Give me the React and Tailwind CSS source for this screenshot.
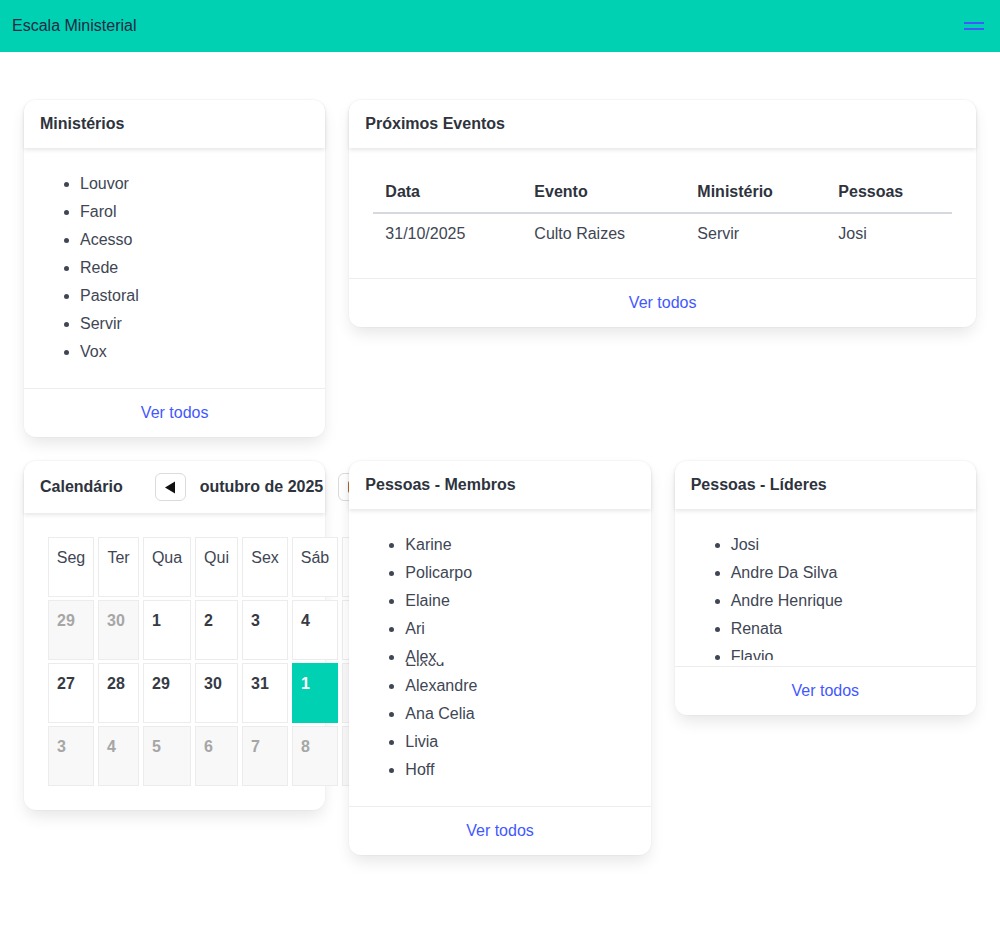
import React from "react";

const font = { fontFamily: '"Liberation Sans", Arial, sans-serif' };

function Card({ title, children, footer = true, className = "" }) {
  return (
    <div className={"relative bg-white rounded-[12px] shadow-[0_8px_16px_-2px_rgba(10,10,10,0.1),0_0_0_1px_rgba(10,10,10,0.02)] " + className}>
      {title}
      {children}
      {footer && (
        <div className="border-t border-[#ededed] h-[49px] flex items-center justify-center text-[#4258ff] text-[16px]">
          Ver todos
        </div>
      )}
    </div>
  );
}

function Header({ text }) {
  return (
    <div className="h-[48px] flex items-center px-4 font-bold text-[16px] text-[#2e333d] shadow-[0_2px_4px_rgba(10,10,10,0.1)] rounded-t-[12px]">
      {text}
    </div>
  );
}

function List({ items }) {
  return (
    <ul className="list-disc pl-8 text-[16px] leading-6 text-[#404654] marker:text-[#404654] flex flex-col gap-1">
      {items.map((it, i) => (
        <li key={i} className={typeof it === "string" ? "" : "h-[25px]"}>{it}</li>
      ))}
    </ul>
  );
}

const colW = [46, 41, 48, 43, 46, 46, 47];
const weekDays = ["Seg", "Ter", "Qua", "Qui", "Sex", "Sáb", "Dom"];
const weeks = [
  [
    ["29", "o"], ["30", "o"], ["1", "c"], ["2", "c"], ["3", "c"], ["4", "c"], ["5", "c"],
  ],
  [
    ["27", "c"], ["28", "c"], ["29", "c"], ["30", "c"], ["31", "c"], ["1", "t"], ["2", "o"],
  ],
  [
    ["3", "o"], ["4", "o"], ["5", "o"], ["6", "o"], ["7", "o"], ["8", "o"], ["9", "o"],
  ],
];

function Calendar() {
  return (
    <div className="relative bg-white rounded-[12px] shadow-[0_8px_16px_-2px_rgba(10,10,10,0.1),0_0_0_1px_rgba(10,10,10,0.02)]">
      <div className="h-[52px] flex items-center pl-4 shadow-[0_2px_4px_rgba(10,10,10,0.1)] rounded-t-[12px] whitespace-nowrap">
        <span className="font-bold text-[16px] text-[#2e333d] shrink-0">Calendário</span>
        <div className="ml-[32px] flex items-center shrink-0">
          <div className="w-[31px] h-[28px] border border-[#dbdbdb] rounded-[6px] bg-white flex items-center justify-center">
            <svg width="12" height="13" viewBox="0 0 12 13"><path d="M11 0.5 L11 12.5 L1 6.5 Z" fill="#111" /></svg>
          </div>
          <span className="ml-[14px] font-bold text-[16px] text-[#2e333d]">outubro de 2025</span>
          <div className="ml-[15px] w-[31px] h-[28px] border border-[#dbdbdb] rounded-[6px] bg-white flex items-center justify-center shrink-0">
            <div className="w-[12px] h-[12px] bg-[#b8652a] rounded-[2px]"></div>
          </div>
        </div>
      </div>
      <div className="pt-6 pb-6 pl-6">
        <div className="flex flex-col gap-[3px]">
          <div className="flex gap-[4px]">
            {weekDays.map((d, i) => (
              <div
                key={d}
                className="h-[60px] shrink-0 border border-[#ececec] bg-white text-center pt-2 text-[16px] leading-6 text-[#404654]"
                style={{ width: colW[i] }}
              >
                {d}
              </div>
            ))}
          </div>
          {weeks.map((w, wi) => (
            <div key={wi} className="flex gap-[4px]">
              {w.map(([n, t], i) => (
                <div
                  key={i}
                  className={
                    "h-[60px] shrink-0 border pt-2 pl-2 text-[16px] leading-6 font-bold " +
                    (t === "t"
                      ? "bg-[#00d1b2] border-[#00d1b2] text-white"
                      : t === "o"
                      ? "bg-[#f8f8f8] border-[#ececec] text-[#a6a6a6]"
                      : "bg-white border-[#ececec] text-[#363a45]")
                  }
                  style={{ width: colW[i] }}
                >
                  {n}
                </div>
              ))}
            </div>
          ))}
        </div>
      </div>
    </div>
  );
}

export default function App() {
  return (
    <div className="min-h-[927px] bg-white" style={font}>
      <nav className="h-[52px] bg-[#00d1b2] flex items-center justify-between pl-3 pr-4">
        <span className="text-[16px] text-[#1f2a44]">Escala Ministerial</span>
        <div className="flex flex-col gap-[4px] w-[20px]">
          <div className="h-[2px] bg-[#4258ff]"></div>
          <div className="h-[2px] bg-[#4258ff]"></div>
        </div>
      </nav>
      <div className="px-6 pt-12 grid grid-cols-3 gap-6 items-start">
        <Card title={<Header text="Ministérios" />}>
          <div className="p-6">
            <List items={["Louvor", "Farol", "Acesso", "Rede", "Pastoral", "Servir", "Vox"]} />
          </div>
        </Card>
        <Card title={<Header text="Próximos Eventos" />} className="col-span-2">
          <div className="p-6">
            <table className="w-full border-collapse text-[16px] leading-6">
              <thead>
                <tr className="border-b-2 border-[#d5d8de]">
                  <th className="w-[149px] text-left font-bold text-[#2e333d] px-3 py-2">Data</th>
                  <th className="w-[163px] text-left font-bold text-[#2e333d] px-3 py-2">Evento</th>
                  <th className="w-[141px] text-left font-bold text-[#2e333d] px-3 py-2">Ministério</th>
                  <th className="text-left font-bold text-[#2e333d] px-3 py-2">Pessoas</th>
                </tr>
              </thead>
              <tbody>
                <tr className="text-[#404654]">
                  <td className="px-3 py-2">31/10/2025</td>
                  <td className="px-3 py-2">Culto Raizes</td>
                  <td className="px-3 py-2">Servir</td>
                  <td className="px-3 py-2">Josi</td>
                </tr>
              </tbody>
            </table>
          </div>
        </Card>
        <Calendar />
        <Card title={<Header text="Pessoas - Membros" />}>
          <div className="p-6">
            <List
              items={[
                "Karine",
                "Policarpo",
                "Elaine",
                "Ari",
                <span className="relative inline-block">
                  Alex
                  <span className="absolute left-0 top-[4px] whitespace-nowrap [clip-path:inset(55%_0_0_0)]">Elxcu</span>
                </span>,
                "Alexandre",
                "Ana Celia",
                "Livia",
                "Hoff",
              ]}
            />
          </div>
        </Card>
        <Card title={<Header text="Pessoas - Líderes" />}>
          <div className="pt-6 px-6 h-[157px]">
            <div className="h-[127px] overflow-hidden">
              <List items={["Josi", "Andre Da Silva", "Andre Henrique", "Renata", "Flavio"]} />
            </div>
          </div>
        </Card>
      </div>
    </div>
  );
}
